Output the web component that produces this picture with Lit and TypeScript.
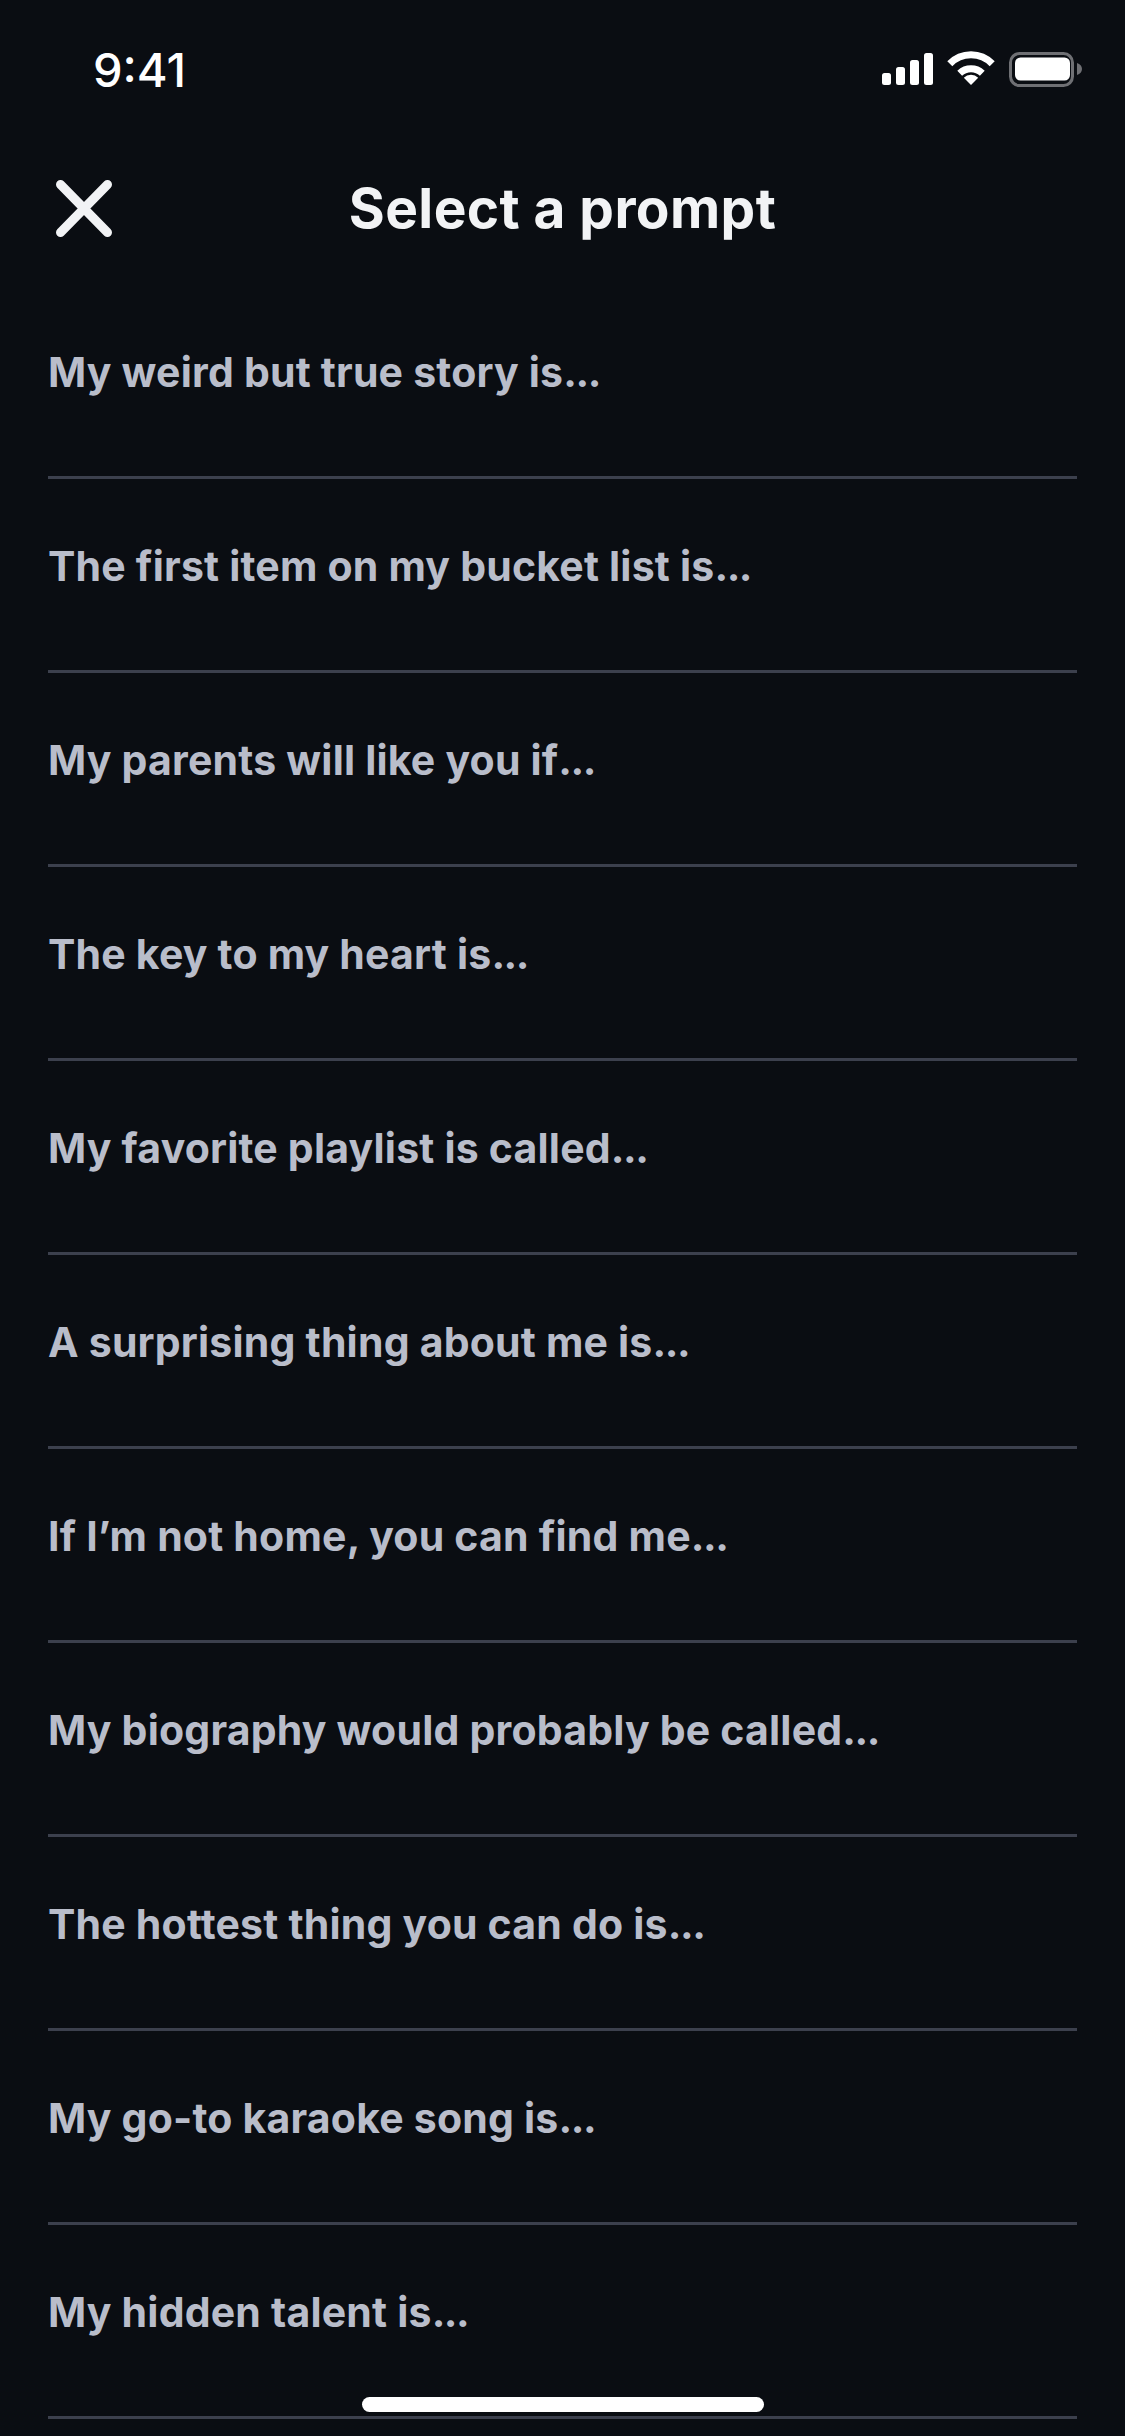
import { LitElement, html, css } from "lit";
import { customElement } from "lit/decorators.js";

const PROMPTS = [
  "My weird but true story is",
  "The first item on my bucket list is",
  "My parents will like you if",
  "The key to my heart is",
  "My favorite playlist is called",
  "A surprising thing about me is",
  "If I’m not home, you can find me",
  "My biography would probably be called",
  "The hottest thing you can do is",
  "My go-to karaoke song is",
  "My hidden talent is",
];

@customElement("app-root")
export class AppRoot extends LitElement {
  static styles = css`
    :host { display: block; }
    .screen {
      position: relative; width: 1125px; height: 2436px; overflow: hidden;
      background: #0a0d12; color: #fff;
      font-family: "Inter", "Liberation Sans", sans-serif;
    }
    .status {
      height: 138px; display: flex; align-items: center; justify-content: space-between;
      padding: 0 40px 0 93px; box-sizing: border-box;
    }
    .time { font-family: "Inter", sans-serif; font-weight: 500; font-size: 47px; letter-spacing: 0; color: #fff; }
    .status svg { display: block; }
    .header {
      height: 147px; padding-bottom: 6px; box-sizing: border-box;
      display: grid; grid-template-columns: 1fr auto 1fr; align-items: center;
      padding-left: 56px;
    }
    .close { display: block; }
    .title { font-size: 55px; line-height: 60px; margin-top: -2px; font-weight: 700; color: #f2f3f5; margin-left: -56px; letter-spacing: 0.4px; }
    .row {
      margin: 0 48px; height: 194px; box-sizing: border-box; padding-top: 62px;
      border-bottom: 3px solid #3c404d;
      font-size: 41px; line-height: 50px; font-weight: 700; color: #b9bdca; letter-spacing: 0.2px;
    }
    .dots { letter-spacing: -1.5px; }
    .home {
      position: absolute; left: 362px; top: 2397px; width: 402px; height: 15px;
      border-radius: 8px; background: #fff;
    }
  `;

  render() {
    return html`<div class="screen">
      <div class="status">
        <span class="time">9:41</span>
        <svg width="205" height="38" viewBox="880 50 205 38" aria-hidden="true">
          <rect x="882" y="73" width="9" height="12" rx="2.5" fill="#fff"/>
          <rect x="896" y="67" width="9" height="18" rx="2.5" fill="#fff"/>
          <rect x="910" y="60" width="9" height="25" rx="2.5" fill="#fff"/>
          <rect x="924" y="53" width="9" height="32" rx="2.5" fill="#fff"/>
          <path d="M949.8 63.8a29.5 29.5 0 0 1 42.4 0" fill="none" stroke="#fff" stroke-width="7"/>
          <path d="M959.7 73.3a16.5 16.5 0 0 1 22.6 0" fill="none" stroke="#fff" stroke-width="7"/>
          <path d="M971 85l-7.2-7.2a10 10 0 0 1 14.4 0z" fill="#fff"/>
          <rect x="1010.5" y="53.5" width="62" height="32" rx="9" fill="none" stroke="#6f7074" stroke-width="3"/>
          <rect x="1015" y="57.5" width="55" height="23" rx="5.5" fill="#fff"/>
          <path d="M1077 63v12c3-1 5-3 5-6s-2-5-5-6z" fill="#6f7074"/>
        </svg>
      </div>
      <div class="header">
        <svg class="close" width="56" height="57" viewBox="0 0 56 57" aria-hidden="true">
          <path d="M4.5 4.5l47 48M51.500 4.500l-47 48" stroke="#f2f3f5" stroke-width="9" stroke-linecap="round" fill="none"/>
        </svg>
        <div class="title">Select a prompt</div>
        <div></div>
      </div>
      ${PROMPTS.map((p) => html`<div class="row">${p}<span class="dots">...</span></div>`)}
      <div class="home"></div>
    </div>`;
  }
}
